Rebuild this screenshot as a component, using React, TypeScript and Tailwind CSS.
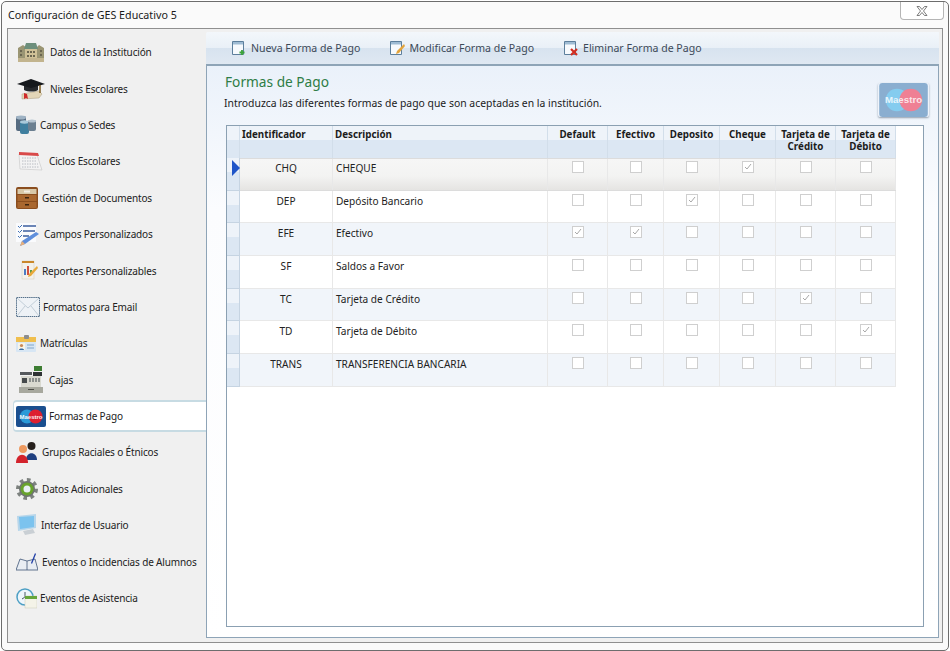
import React from "react";

const F = "font-['Noto_Sans','Open_Sans',sans-serif]";

function Building() {
  return (
    <svg width="28" height="22" viewBox="0 0 28 22">
      <path d="M1 7l5-3 4 3h9l3-3 5 3v13H1z" fill="#9a9573" />
      <path d="M9 2h10l2 6H7z" fill="#6d8f7c" />
      <rect x="1" y="17" width="26" height="4" fill="#c2b48e" />
      <rect x="8" y="8" width="12" height="9" fill="#cfc197" />
      <path d="M3 9h2v2H3zM3 13h2v2H3zM10 10h2v2h-2zM13 10h2v2h-2zM16 10h2v2h-2zM10 14h2v2h-2zM13 14h2v2h-2zM16 14h2v2h-2zM23 9h2v2h-2zM23 13h2v2h-2z" fill="#6b6650" />
    </svg>
  );
}
function Grad() {
  return (
    <svg width="28" height="22" viewBox="0 0 28 22">
      <path d="M5 16l17-3 3 3-3 4-17 1z" fill="#e3d6b8" stroke="#a89a7c" strokeWidth=".5" />
      <path d="M7 15l3 1 1 5-2-1-2 1z" fill="#cf2a2a" />
      <path d="M7 7h14v5c-3 2-10 2-14 0z" fill="#25282c" />
      <path d="M0 6l14-5 14 5-14 4z" fill="#15181c" />
      <path d="M23 7v8" stroke="#7a5a20" strokeWidth="1.5" />
    </svg>
  );
}
function Drums() {
  return (
    <svg width="20" height="19" viewBox="0 0 20 19">
      <rect x="0" y="1" width="10" height="15" rx="2" fill="#566b80" />
      <ellipse cx="5" cy="2.500" rx="5" ry="2" fill="#9fb3c4" />
      <rect x="4" y="6" width="9" height="13" rx="2" fill="#3f7f9f" />
      <ellipse cx="8.500" cy="7" rx="4.500" ry="1.700" fill="#a9c9da" />
      <rect x="12" y="5" width="8" height="11" rx="2" fill="#6b7f90" />
      <ellipse cx="16" cy="6" rx="4" ry="1.500" fill="#b6c5d1" />
    </svg>
  );
}
function Cal() {
  return (
    <svg width="26" height="20" viewBox="0 0 26 20">
      <path d="M2 3l18 1 5 15-22-1z" fill="#f3f3f3" stroke="#bdbdbd" strokeWidth=".5" />
      <path d="M2 1l19 1 1 3L2 4z" fill="#d94a4a" />
      <path d="M5 7h14M5 10h15M5 13h16M5 16h17" stroke="#b9bcc2" strokeWidth="1" strokeDasharray="1.5 1" />
    </svg>
  );
}
function Cabinet() {
  return (
    <svg width="22" height="22" viewBox="0 0 22 22">
      <rect x="0" y="0" width="22" height="22" rx="2" fill="#8a4d1e" />
      <rect x="1.500" y="2" width="19" height="5" fill="#d8c8a8" />
      <rect x="1.500" y="8" width="19" height="6" fill="#a9672f" />
      <rect x="1.500" y="15" width="19" height="6" fill="#a9672f" />
      <rect x="8" y="3.500" width="6" height="2" fill="#f3eee3" />
      <rect x="9" y="10" width="4" height="1.500" fill="#3c2410" />
      <rect x="9" y="17" width="4" height="1.500" fill="#3c2410" />
    </svg>
  );
}
function ListPen() {
  return (
    <svg width="23" height="23" viewBox="0 0 23 23">
      <rect x="0" y="0" width="20" height="19" fill="#fafbfd" />
      <path d="M2 3l1.500 1.500L6 2M2 8l1.500 1.500L6 7M2 13l1.500 1.500L6 12" stroke="#3c6fb5" fill="none" />
      <path d="M7 3h13M7 8h12M7 13h6" stroke="#3d5f9e" strokeWidth="1.600" />
      <path d="M20 9l3 2-14 10-5 2 2-5z" fill="#5f8fdc" />
      <path d="M6 18l3 3-5 2z" fill="#e9b07a" />
    </svg>
  );
}
function Report() {
  return (
    <svg width="18" height="22" viewBox="0 0 18 22">
      <rect x="2" y="1" width="12" height="18" fill="#f3f1ea" stroke="#d2cbb5" strokeWidth=".5" />
      <rect x="2" y="1" width="12" height="2" fill="#c9872a" />
      <rect x="4" y="9" width="2" height="6" fill="#4d7cc2" />
      <rect x="7" y="6" width="2" height="9" fill="#d1503c" />
      <rect x="10" y="10" width="2" height="5" fill="#5a9a48" />
      <path d="M17 6l1 2-7 8-3 1 1-3z" fill="#e8a93a" />
    </svg>
  );
}
function Mail() {
  return (
    <svg width="24" height="20" viewBox="0 0 24 20">
      <rect x=".5" y=".5" width="23" height="19" fill="#eef2f6" stroke="#55708a" strokeDasharray="1.5 .6" />
      <path d="M1 1l11 10L23 1M1 19l8-10M23 19l-8-10" fill="none" stroke="#c2ced8" />
    </svg>
  );
}
function Idcard() {
  return (
    <svg width="20" height="17" viewBox="0 0 20 17">
      <rect x="0" y="2" width="20" height="15" rx="1" fill="#d7e6f4" />
      <rect x="0" y="2" width="20" height="5" fill="#f0bf4e" />
      <rect x="8" y="0" width="5" height="4" rx="1" fill="#8d8d8d" />
      <rect x="2" y="8" width="7" height="7" fill="#f8f4e8" />
      <circle cx="5.500" cy="10.500" r="1.600" fill="#c98a5a" />
      <path d="M3 15c0-2 5-2 5 0z" fill="#3a6ea5" />
      <path d="M11 10h7M11 13h7" stroke="#9ebcd8" strokeWidth="1.500" />
    </svg>
  );
}
function Register() {
  return (
    <svg width="24" height="28" viewBox="0 0 24 28">
      <rect x="15" y="0" width="8" height="5" fill="#3d7d32" />
      <rect x="1" y="6" width="12" height="3" fill="#55595c" />
      <rect x="14" y="6" width="9" height="4" fill="#2e3234" />
      <rect x="2" y="10" width="20" height="12" fill="#d9d9d0" />
      <path d="M3 12h5v5H3z" fill="#45494b" />
      <path d="M10 12h2v4h-2zM13 12h2v4h-2zM16 12h2v4h-2zM19 12h2v4h-2z" fill="#8b8f8d" />
      <rect x="0" y="21" width="24" height="6" fill="#a7a89e" />
      <rect x="9" y="23" width="6" height="1" fill="#4d4d47" />
    </svg>
  );
}
function Maestro({ w, h, faded }: { w: number; h: number; faded?: boolean }) {
  return (
    <svg width={w} height={h} viewBox="0 0 30 21">
      <rect x="0" y="0" width="30" height="21" rx="2" fill={faded ? "#8aaed0" : "#1a4f8f"} />
      <circle cx="11" cy="10.500" r="7" fill={faded ? "#84ccef" : "#2a9ad8"} />
      <circle cx="19.500" cy="10.500" r="7" fill={faded ? "#ef8094" : "#dd1f2f"} />
      <text x="15" y="12.500" textAnchor="middle" fontSize="6" fontWeight="700" fill="#ffffff" fontFamily="Liberation Sans, sans-serif" opacity={faded ? 0.8 : 0.95}>
        Maestro
      </text>
    </svg>
  );
}
function People() {
  return (
    <svg width="22" height="22" viewBox="0 0 22 22">
      <circle cx="15.500" cy="5" r="4" fill="#26201c" />
      <path d="M10 19c0-9 11-9 11 0z" fill="#1f3f80" />
      <circle cx="7" cy="8" r="4" fill="#ee9a60" />
      <path d="M0 22c0-11 12-11 12 0z" fill="#d3232c" />
    </svg>
  );
}
function Gear() {
  return (
    <svg width="22" height="22" viewBox="0 0 22 22">
      <circle cx="11" cy="11" r="9" fill="none" stroke="#7d827f" strokeWidth="4" strokeDasharray="3.500 3.500" />
      <circle cx="11" cy="11" r="8" fill="#6f7472" />
      <circle cx="11" cy="11" r="6.500" fill="#68a32c" />
      <circle cx="11" cy="11" r="3.500" fill="#e8f0f4" />
    </svg>
  );
}
function Monitor() {
  return (
    <svg width="20" height="22" viewBox="0 0 20 22">
      <path d="M0 2l19-2v14L1 17z" fill="#b8d6ea" />
      <path d="M2 3l15-1v11L3 15z" fill="#7cc3ee" />
      <path d="M6 17l10-2 2 4-10 2z" fill="#c9cfd4" />
    </svg>
  );
}
function Book() {
  return (
    <svg width="22" height="18" viewBox="0 0 22 18">
      <path d="M4 6l7 2 8-2 3 11H0z" fill="#e8edf3" stroke="#3f5677" strokeWidth=".8" />
      <path d="M11 8v9" stroke="#3f5677" strokeWidth=".8" />
      <path d="M15 10l4-10 1 1-4 10z" fill="#2340a8" />
    </svg>
  );
}
function Clock() {
  return (
    <svg width="21" height="21" viewBox="0 0 21 21">
      <circle cx="9" cy="9" r="8" fill="#eef6fb" stroke="#4d9fc4" strokeWidth="1.500" />
      <path d="M9 4v5l-3 2" stroke="#4b5a66" fill="none" />
      <rect x="9" y="8" width="12" height="12" fill="#f4f3e8" stroke="#c9c9b8" strokeWidth=".5" />
      <rect x="9" y="8" width="12" height="3" fill="#66a63a" />
    </svg>
  );
}

const sideItems: { label: string; icon: React.ReactNode; cls: string; active?: boolean }[] = [
  { label: "Datos de la Institución", icon: <Building />, cls: "w-[34px] pl-[1px]" },
  { label: "Niveles Escolares", icon: <Grad />, cls: "w-[34px] pl-[1px]" },
  { label: "Campus o Sedes", icon: <Drums />, cls: "w-[24px]" },
  { label: "Ciclos Escolares", icon: <Cal />, cls: "w-[33px] pl-[1px]" },
  { label: "Gestión de Documentos", icon: <Cabinet />, cls: "w-[26px]" },
  { label: "Campos Personalizados", icon: <ListPen />, cls: "w-[28px]" },
  { label: "Reportes Personalizables", icon: <Report />, cls: "w-[26px] pl-[4px]" },
  { label: "Formatos para Email", icon: <Mail />, cls: "w-[27px]" },
  { label: "Matrículas", icon: <Idcard />, cls: "w-[24px]" },
  { label: "Cajas", icon: <Register />, cls: "w-[33px] pl-[3px]" },
  { label: "Formas de Pago", icon: <Maestro w={30} h={21} />, cls: "w-[33px]", active: true },
  { label: "Grupos Raciales o Étnicos", icon: <People />, cls: "w-[26px]" },
  { label: "Datos Adicionales", icon: <Gear />, cls: "w-[26px]" },
  { label: "Interfaz de Usuario", icon: <Monitor />, cls: "w-[25px] pl-[1px]" },
  { label: "Eventos o Incidencias de Alumnos", icon: <Book />, cls: "w-[26px]" },
  { label: "Eventos de Asistencia", icon: <Clock />, cls: "w-[24px]" },
];

function ToolIcon({ kind }: { kind: "new" | "edit" | "del" }) {
  return (
    <svg width="15" height="15" viewBox="0 0 15 15">
      <path d="M.5.5h11v13H.5z" fill="#f7fafd" stroke="#5d7f9c" />
      <rect x="1" y="1" width="10" height="2.500" fill="#9fbcd4" />
      {kind === "new" && <path d="M10 9v5M7.500 11.500h5" stroke="#3aa33a" strokeWidth="1.800" />}
      {kind === "edit" && <path d="M14 3l1 2-6 7-3 1 1-3z" fill="#e3a43c" />}
      {kind === "del" && <path d="M7 8l6 6M13 8l-6 6" stroke="#d22c1f" strokeWidth="2.200" />}
    </svg>
  );
}

const cols = "grid grid-cols-[13px_93px_215px_60px_56px_56px_56px_60px_60px]";
const headers = ["Default", "Efectivo", "Deposito", "Cheque", "Tarjeta de Crédito", "Tarjeta de Débito"];
const rows: [string, string, number][] = [
  ["CHQ", "CHEQUE", 3],
  ["DEP", "Depósito Bancario", 2],
  ["EFE", "Efectivo", -1],
  ["SF", "Saldos a Favor", -2],
  ["TC", "Tarjeta de Crédito", 4],
  ["TD", "Tarjeta de Débito", 5],
  ["TRANS", "TRANSFERENCIA BANCARIA", -2],
];

function Check({ on, selected }: { on: boolean; selected: boolean }) {
  return (
    <div className={`w-[12px] h-[12px] ${selected ? "mt-[2px]" : "mt-[3px]"} border border-[#cfcfcf] bg-white flex items-center justify-center`}>
      {on && (
        <svg width="8" height="8" viewBox="0 0 8 8">
          <path d="M1 4l2 2 4-5" fill="none" stroke="#a8a8a8" strokeWidth="1" />
        </svg>
      )}
    </div>
  );
}

function HeadCell({ children, center }: { children: React.ReactNode; center?: boolean }) {
  return (
    <div
      className={`h-[32px] border-r border-[#d2deea] bg-[linear-gradient(#eef3f9_0%,#eef3f9_45%,#dce7f3_45%,#dce7f3_100%)] pt-[3px] text-[9.800px] leading-[12px] font-bold text-[#1c1c1c] ${
        center ? "text-center" : "pl-[2px]"
      }`}
    >
      {children}
    </div>
  );
}

export default function App() {
  return (
    <div className={`${F} w-[950px] h-[651px] bg-white overflow-hidden pt-[1px] pr-[1px] pb-[0px] pl-[1px]`}>
      <div className="w-full h-full flex flex-col rounded-[5px] border border-[#6d6d6d] bg-[#fafafa] px-[5px] pb-[7px]">
        <div className="h-[26px] shrink-0 flex items-start justify-between">
          <span className="pl-[1px] pt-[5px] text-[10.700px] leading-[16px] text-[#1a1a1a]">Configuración de GES Educativo 5</span>
          <div className="w-[44px] h-[18px] mr-[-1px] rounded-b-[4px] border-x border-b border-[#b5b5b5] bg-white flex items-center justify-center">
            <svg width="14" height="12" viewBox="0 0 14 12">
              <path d="M2 1.500h2.500L7 4.500l2.500-3H12L8.500 6 12 10.500H9.500L7 7.500l-2.500 3H2L5.500 6z" fill="#fff" stroke="#6f6f6f" strokeWidth=".9" />
            </svg>
          </div>
        </div>
        <div className="flex-1 min-h-0 flex border border-[#8f8f8f] bg-[#f0f0f0]">
          <aside className="w-[198px] shrink-0 flex flex-col pt-[5px]">
            {sideItems.map((it) => (
              <div
                key={it.label}
                className={
                  it.active
                    ? "h-[32px] my-[2.200px] ml-[5px] relative z-10 pl-[2px] flex items-center rounded-l-[4px] border-y-2 border-l border-[#c7dbe3] bg-white"
                    : "h-[36.400px] ml-[8px] flex items-center"
                }
              >
                <div className={`${it.cls} shrink-0 flex items-center`}>{it.icon}</div>
                <span className="text-[10px] leading-[14px] tracking-[-0.15px] text-[#222] whitespace-nowrap">{it.label}</span>
              </div>
            ))}
          </aside>
          <main className="flex-1 min-w-0 flex flex-col pt-[3px] pr-[3px] pb-[4px]">
            <div className="h-[34px] shrink-0 flex items-center gap-[30px] pl-[26px] rounded-tl-[2px] border-b-2 border-[#8ea4b7] bg-[linear-gradient(#f3f7fb_0%,#e9f0f7_50%,#d7e3ef_50%,#dfe8f2_100%)]">
              {[
                ["new", "Nueva Forma de Pago"],
                ["edit", "Modificar Forma de Pago"],
                ["del", "Eliminar Forma de Pago"],
              ].map(([k, t]) => (
                <div key={t} className="flex items-center gap-[4px]">
                  <ToolIcon kind={k as "new" | "edit" | "del"} />
                  <span className="text-[10.550px] leading-[14px] text-[#3d4a58]">{t}</span>
                </div>
              ))}
            </div>
            <div className="flex-1 min-h-0 flex flex-col border-x border-b border-[#8ea4b7] bg-[linear-gradient(#eaf1fa_0%,#fbfcfe_25%,#ffffff_100%)] pl-[19px] pr-[14px] pb-[10px]">
              <div className="h-[59px] shrink-0 flex justify-between">
                <div className="ml-[-2px]">
                  <div className="pl-[1px] pt-[7px] text-[13.700px] leading-[18px] text-[#2e7d46]">Formas de Pago</div>
                  <div className="pt-[5px] text-[10.400px] leading-[14px] text-[#1a1a1a]">
                    Introduzca las diferentes formas de pago que son aceptadas en la institución.
                  </div>
                </div>
                <div className="mt-[17px] mr-[-5px] h-[34px] shadow-[0_1px_2px_rgba(80,100,120,0.6)] rounded-[2px]">
                  <Maestro w={51} h={34} faded />
                </div>
              </div>
              <div className="flex-1 min-h-0 border border-[#8ba0b2] bg-white text-[10.100px] text-[#222]">
                <div className={cols}>
                  <HeadCell>{""}</HeadCell>
                  <HeadCell>Identificador</HeadCell>
                  <HeadCell>Descripción</HeadCell>
                  {headers.map((h) => (
                    <HeadCell key={h} center>
                      {h.startsWith("Tarjeta") ? (
                        <>
                          Tarjeta de
                          <br />
                          {h.split(" ")[2]}
                        </>
                      ) : (
                        h
                      )}
                    </HeadCell>
                  ))}
                </div>
                {rows.map(([id, desc, chk], i) => {
                  const selected = i === 0;
                  const checks = i === 2 ? [0, 1] : chk >= 0 ? [chk] : [];
                  const bg = selected
                    ? "bg-[linear-gradient(#f6f6f6_0%,#f3f3f2_55%,#e5e4e2_100%)] border-y border-[#dcdcdc]"
                    : i % 2 === 0
                      ? "bg-[#f1f5fa] border-b border-[#e8e8e8]"
                      : "bg-white border-b border-[#e8e8e8]";
                  const pad = selected ? "pt-[2px]" : "pt-[3px]";
                  return (
                    <div key={id} className={`${cols} h-[32.700px]`}>
                      <div className="relative border-r border-b border-[#c6d4e2] bg-[linear-gradient(#eef3f9_0%,#eef3f9_45%,#dce7f3_45%,#dce7f3_100%)]">
                        {selected && (
                          <div className="absolute left-[5px] top-[2px] w-0 h-0 border-y-[8px] border-y-transparent border-l-[8px] border-l-[#1f55c8]" />
                        )}
                      </div>
                      <div className={`${bg} col-span-8 grid grid-cols-[93px_215px_60px_56px_56px_56px_60px_60px]`}>
                        <div className={`border-r border-[#e8e8e8] ${pad} text-center leading-[14px]`}>{id}</div>
                        <div className={`border-r border-[#e8e8e8] ${pad} pl-[3px] leading-[14px]`}>{desc}</div>
                        {headers.map((h, c) => (
                          <div key={h} className="border-r border-[#e8e8e8] flex justify-center">
                            <Check on={checks.includes(c)} selected={selected} />
                          </div>
                        ))}
                      </div>
                    </div>
                  );
                })}
              </div>
            </div>
          </main>
        </div>
      </div>
    </div>
  );
}
